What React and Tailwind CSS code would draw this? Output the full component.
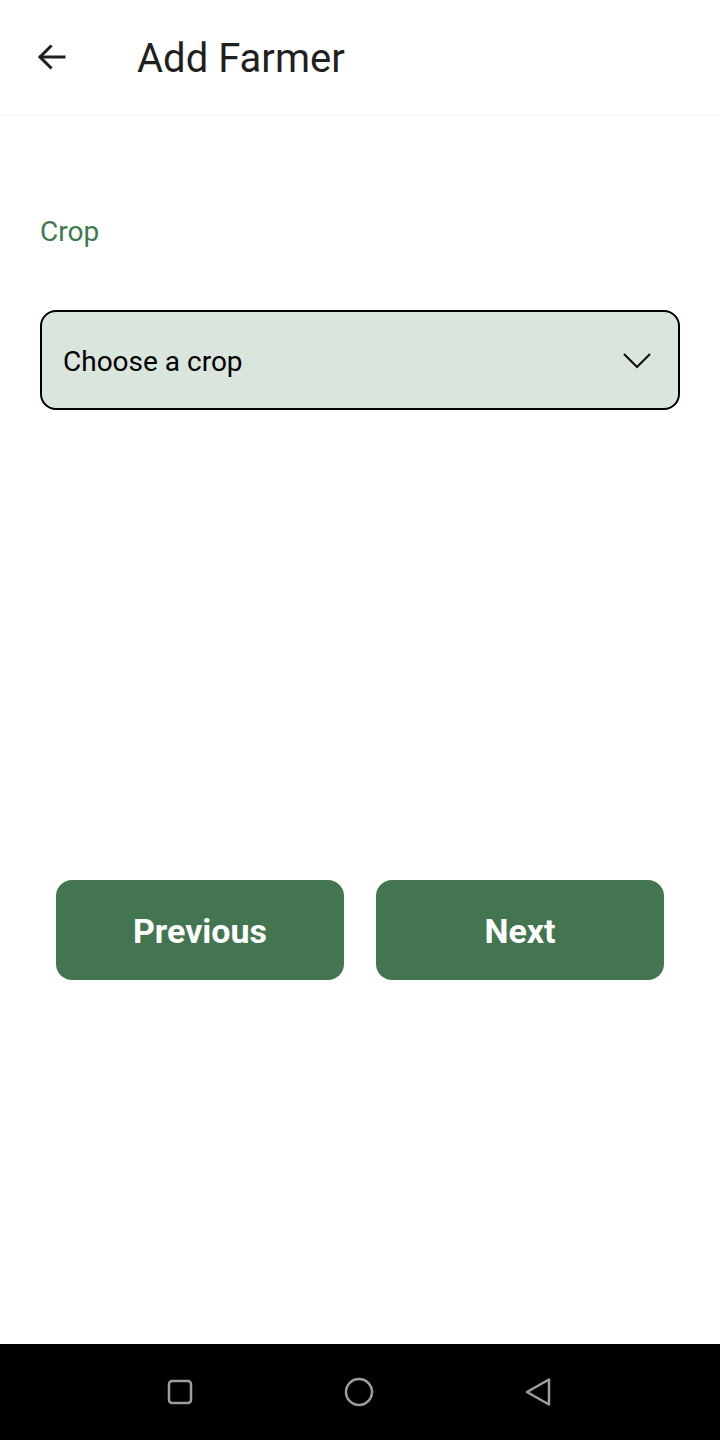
export default function App() {
  return (
    <div className="w-[720px] h-[1440px] bg-white flex flex-col font-['Roboto',sans-serif]">
      {/* Top bar */}
      <div className="h-[114px] flex items-center shrink-0 shadow-[0_1px_2px_rgba(0,0,0,0.04)]">
        <div className="w-[137px] pl-[34px] flex items-center">
          <svg width="36" height="36" viewBox="0 0 24 24" fill="none" stroke="#1f1f1f" strokeWidth="2" strokeLinecap="square">
            <path d="M20 12H4.5" />
            <path d="M11 5l-7 7 7 7" />
          </svg>
        </div>
        <h1 className="text-[40px] text-[#1f1f1f] leading-none mt-[3px]">Add Farmer</h1>
      </div>

      {/* Content */}
      <div className="flex-1 flex flex-col px-[40px]">
        <p className="mt-[104px] text-[28px] leading-none text-[#3f7a4f]">Crop</p>

        <button className="mt-[64px] h-[100px] w-full rounded-[16px] border-2 border-black bg-[#dae5dd] flex items-center justify-between pl-[21px] pr-[26px]">
          <span className="text-[28px] text-black mt-[4px]">Choose a crop</span>
          <svg width="30" height="18" viewBox="0 0 30 18" fill="none" stroke="#111" strokeWidth="2.2">
            <path d="M2 3l13 13L28 3" />
          </svg>
        </button>

        <div className="mt-[470px] flex gap-[32px] px-[16px]">
          <button className="flex-1 h-[100px] rounded-[16px] bg-[#437650] text-white text-[34px] font-bold pt-[2px]">Previous</button>
          <button className="flex-1 h-[100px] rounded-[16px] bg-[#437650] text-white text-[34px] font-bold pt-[2px]">Next</button>
        </div>
      </div>

      {/* Android nav bar */}
      <div className="h-[96px] bg-black flex items-center justify-between px-[166px] shrink-0">
        <svg width="28" height="28" viewBox="0 0 28 28" fill="none" stroke="#9e9e9e" strokeWidth="2.5">
          <rect x="3" y="3" width="22" height="22" rx="3" />
        </svg>
        <svg width="32" height="32" viewBox="0 0 32 32" fill="none" stroke="#9e9e9e" strokeWidth="2.5">
          <circle cx="16" cy="16" r="13" />
        </svg>
        <svg width="30" height="30" viewBox="0 0 30 30" fill="none" stroke="#9e9e9e" strokeWidth="2.5" strokeLinejoin="round">
          <path d="M25 2.5v25L3 15z" />
        </svg>
      </div>
    </div>
  );
}
